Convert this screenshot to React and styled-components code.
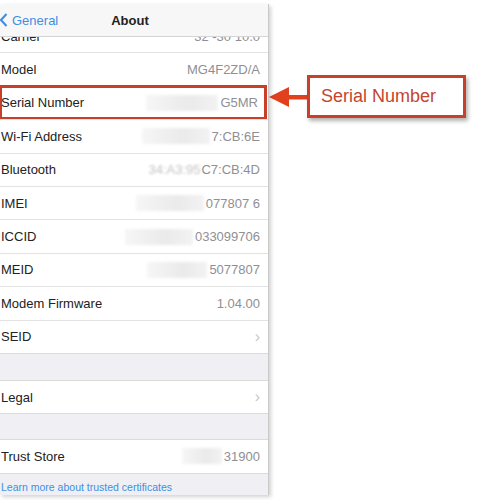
import styled, { createGlobalStyle } from 'styled-components';

const GlobalStyle = createGlobalStyle`
  body {
    margin: 0;
    background: #ffffff;
    font-family: "Liberation Sans", Arial, sans-serif;
  }
`;

const Page = styled.div`
  width: 500px;
  height: 500px;
  display: flex;
  align-items: flex-start;
  overflow: hidden;
  background: #ffffff;
`;

const Phone = styled.div`
  width: 268px;
  height: 491px;
  margin-top: 4px;
  display: flex;
  flex-direction: column;
  background: #efeff4;
  border-right: 1px solid #c9c9c9;
  box-shadow: 2px 2px 4px rgba(0, 0, 0, 0.18);
  position: relative;
  overflow: hidden;
`;

const NavBar = styled.div`
  height: 32px;
  flex-shrink: 0;
  display: flex;
  align-items: center;
  justify-content: center;
  background: #f7f7f7;
  border-bottom: 1px solid #d4d4d4;
  position: relative;
  z-index: 2;
`;

const Back = styled.div`
  position: absolute;
  left: 0;
  top: 0;
  bottom: 0;
  display: flex;
  align-items: center;
  gap: 4px;
  color: #3d8fe3;
  font-size: 13px;
`;

const Title = styled.div`
  font-size: 13px;
  font-weight: bold;
  color: #222;
  margin-right: 8px;
`;

const Viewport = styled.div`
  flex: 1;
  overflow: hidden;
`;

const Scroller = styled.div`
  margin-top: -17px;
`;

const Section = styled.div`
  background: #ffffff;
  border-top: ${(p) => (p.$top ? '1px solid #dadada' : 'none')};
  border-bottom: 1px solid #dadada;
`;

const Row = styled.div`
  height: 32.4px;
  display: flex;
  align-items: center;
  padding: 0 8px 0 1px;
  font-size: 13px;
  color: #222;
  position: relative;
  & + & {
    border-top: 1px solid #e3e3e3;
  }
  ${(p) => p.$highlight && `
    outline: 3px solid #c8402a;
    outline-offset: -2px;
    margin-right: 2px;
  `}
`;

const Label = styled.span`
  flex: 1;
`;

const Value = styled.span`
  color: #8f8f94;
  display: flex;
  align-items: center;
`;

const Blur = styled.span`
  display: inline-block;
  width: ${(p) => p.$w}px;
  height: 16px;
  margin-right: 2px;
  background: linear-gradient(to right, #f6f6f6, #eaeaea 60%, #f2f2f2);
  filter: blur(1.5px);
`;

const BlurText = styled.span`
  color: #c4c4c4;
  filter: blur(1px);
  margin-right: 1px;
`;

const Chevron = styled.span`
  color: #c7c7cc;
  font-size: 16px;
`;

const Gap = styled.div`
  height: ${(p) => p.$h}px;
`;

const Footer = styled.div`
  padding: 7px 1px;
  font-size: 10.5px;
  color: #3d8fe3;
`;

const Annotation = styled.div`
  display: flex;
  align-items: center;
  margin-top: 75px;
`;

const Callout = styled.div`
  box-sizing: border-box;
  width: 159px;
  height: 43px;
  border: 3px solid #c8402a;
  display: flex;
  align-items: center;
  padding-left: 11px;
  font-size: 18px;
  color: #c44530;
  background: #ffffff;
  box-shadow: 2px 3px 4px rgba(0, 0, 0, 0.3);
`;

const rows = [
  { label: 'Model', value: 'MG4F2ZD/A' },
  { label: 'Serial Number', value: 'G5MR', blur: 72, highlight: true },
  { label: 'Wi-Fi Address', value: '7:CB:6E', blur: 68 },
  { label: 'Bluetooth', value: 'C7:CB:4D', blurText: '34:A3:95' },
  { label: 'IMEI', value: '077807 6', blur: 68 },
  { label: 'ICCID', value: '033099706', blur: 68 },
  { label: 'MEID', value: '5077807', blur: 60 },
  { label: 'Modem Firmware', value: '1.04.00' },
];

const ChevronLeft = () => (
  <svg width="8" height="14" viewBox="0 0 8 14">
    <path d="M6.5 1 L1 7 L6.5 13" fill="none" stroke="#3d8fe3" strokeWidth="2" />
  </svg>
);

const Arrow = () => (
  <svg width="38" height="24" viewBox="0 0 38 24">
    <rect x="16" y="10" width="22" height="4.5" fill="#e23f1f" />
    <polygon points="0,12 20,2 20,22" fill="#e23f1f" />
  </svg>
);

const App = () => {
  return (
    <Page>
      <GlobalStyle />
      <Phone>
        <NavBar>
          <Back>
            <ChevronLeft />
            General
          </Back>
          <Title>About</Title>
        </NavBar>
        <Viewport>
          <Scroller>
            <Section>
              <Row>
                <Label>Carrier</Label>
                <Value>32 -30 10.0</Value>
              </Row>
              {rows.map((r) => (
                <Row key={r.label} $highlight={r.highlight}>
                  <Label>{r.label}</Label>
                  <Value>
                    {r.blur && <Blur $w={r.blur} />}
                    {r.blurText && <BlurText>{r.blurText}</BlurText>}
                    {r.value}
                  </Value>
                </Row>
              ))}
              <Row>
                <Label>SEID</Label>
                <Chevron>›</Chevron>
              </Row>
            </Section>
            <Gap $h={26} />
            <Section $top>
              <Row>
                <Label>Legal</Label>
                <Chevron>›</Chevron>
              </Row>
            </Section>
            <Gap $h={25} />
            <Section $top>
              <Row>
                <Label>Trust Store</Label>
                <Value>
                  <Blur $w={40} />
                  31900
                </Value>
              </Row>
            </Section>
            <Footer>Learn more about trusted certificates</Footer>
          </Scroller>
        </Viewport>
      </Phone>
      <Annotation>
        <Arrow />
        <Callout>Serial Number</Callout>
      </Annotation>
    </Page>
  );
};

export default App;
